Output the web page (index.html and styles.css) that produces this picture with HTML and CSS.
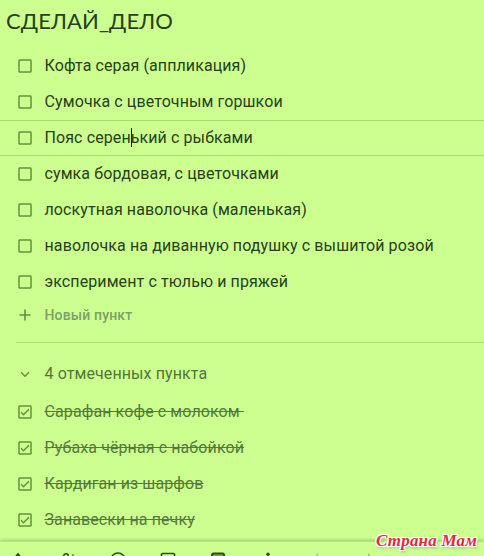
FILE: index.html
```html
<!DOCTYPE html>
<html lang="ru">
<head>
<meta charset="utf-8">
<title>СДЕЛАЙ_ДЕЛО</title>
<link rel="stylesheet" href="styles.css">
</head>
<body>
<svg class="defs" width="0" height="0">
  <symbol id="box" viewBox="0 0 24 24"><path d="M19 5v14H5V5h14m0-2H5c-1.100 0-2 .9-2 2v14c0 1.100.9 2 2 2h14c1.100 0 2-.9 2-2V5c0-1.100-.9-2-2-2z"/></symbol>
  <symbol id="checked" viewBox="0 0 24 24"><path d="M19 3H5c-1.100 0-2 .9-2 2v14c0 1.100.9 2 2 2h14c1.100 0 2-.9 2-2V5c0-1.100-.9-2-2-2zm0 16H5V5h14v14zM17.990 9l-1.410-1.420-6.590 6.590-2.580-2.570-1.420 1.410 4 3.990z"/></symbol>
</svg>
<main class="note">
  <h1 class="title">СДЕЛАЙ_ДЕЛО</h1>
  <ul class="list">
    <li class="row"><svg class="icon"><use href="#box"/></svg><span>Кофта серая (аппликация)</span></li>
    <li class="row"><svg class="icon"><use href="#box"/></svg><span>Сумочка с цветочным горшкои</span></li>
    <li class="row focused"><svg class="icon"><use href="#box"/></svg><span>Пояс серен<i class="caret"></i>ький с рыбками</span></li>
    <li class="row"><svg class="icon"><use href="#box"/></svg><span>сумка бордовая, с цветочками</span></li>
    <li class="row"><svg class="icon"><use href="#box"/></svg><span>лоскутная наволочка (маленькая)</span></li>
    <li class="row"><svg class="icon"><use href="#box"/></svg><span>наволочка на диванную подушку с вышитой розой</span></li>
    <li class="row"><svg class="icon"><use href="#box"/></svg><span>эксперимент с тюлью и пряжей</span></li>
  </ul>
  <div class="row add"><svg class="icon" viewBox="0 0 18 18"><path d="M8.200 3.500h1.600v4.700h4.700v1.600H9.800v4.700H8.200V9.800H3.500V8.200h4.700z"/></svg><span>Новый пункт</span></div>
  <div class="row summary"><svg class="icon" viewBox="0 0 18 18"><path d="M5 7.200l4 4 4-4" fill="none" stroke="currentColor" stroke-width="1.500"/></svg><span>4 отмеченных пункта</span></div>
  <ul class="list done">
    <li class="row"><svg class="icon"><use href="#checked"/></svg><span>Сарафан кофе с молоком&nbsp;</span></li>
    <li class="row"><svg class="icon"><use href="#checked"/></svg><span>Рубаха чёрная с набойкой</span></li>
    <li class="row"><svg class="icon"><use href="#checked"/></svg><span>Кардиган из шарфов</span></li>
    <li class="row"><svg class="icon"><use href="#checked"/></svg><span>Занавески на печку</span></li>
  </ul>
</main>
<footer class="toolbar">
  <svg class="tool" viewBox="0 0 18 18"><path d="M9 0.500l3.500 4.500h-7z"/></svg>
  <svg class="tool" viewBox="0 0 18 18"><circle cx="7" cy="4" r="2.300" fill="none" stroke="currentColor" stroke-width="1.500"/><path d="M13.500 2h1v5h-1z"/></svg>
  <svg class="tool" viewBox="0 0 18 18"><circle cx="9" cy="8" r="7" fill="none" stroke="currentColor" stroke-width="1.600"/><path d="M6 4h2v2H6zM10 4h2v2h-2z"/></svg>
  <svg class="tool" viewBox="0 0 18 18"><rect x="2.500" y="1.500" width="13" height="13" rx="1" fill="none" stroke="currentColor" stroke-width="1.700"/></svg>
  <svg class="tool" viewBox="0 0 18 18"><rect x="3" y="1.500" width="12" height="13" rx="1.500" fill="none" stroke="currentColor" stroke-width="2"/><path d="M3 2h12v3H3z" opacity=".5"/></svg>
  <svg class="tool" viewBox="0 0 18 18"><circle cx="9" cy="2.200" r="1.700"/></svg>
  <svg class="tool faint" viewBox="0 0 18 18"><path d="M7 3l2-2v4z"/></svg>
  <svg class="tool faint" viewBox="0 0 18 18"><path d="M9 1l2 2v2H9z"/></svg>
</footer>
<div class="watermark">Страна Мам</div>
</body>
</html>
```
FILE: styles.css
```css
* { box-sizing: border-box; }
html, body { margin: 0; height: 556px; overflow: hidden; }
body {
  display: flex;
  flex-direction: column;
  position: relative;
  background: #ccff90;
  color: #28401a;
  font-family: Roboto, "Liberation Sans", sans-serif;
}
.defs { position: absolute; }
.note { height: 541px; }
.title {
  height: 48px;
  margin: 0;
  padding: 6px 0 0 6px;
  font: 400 22px/30px Lato, "Open Sans", sans-serif;
  letter-spacing: .1px;
  white-space: nowrap;
}
.list { list-style: none; margin: 0; padding: 0; }
.row {
  display: flex;
  align-items: center;
  height: 36px;
  padding-left: 16px;
  gap: 10.500px;
  font-size: 16px;
  line-height: 24px;
  letter-spacing: .1px;
  white-space: nowrap;
}
.icon { width: 18px; height: 18px; flex: none; color: #65903c; fill: currentColor; }
.focused { border-top: 1px solid #a8d775; border-bottom: 1px solid #a8d775; }
.caret {
  display: inline-block;
  width: 1px;
  height: 19px;
  margin: 0 -1px 0 0;
  vertical-align: -4px;
  background: #142407;
}
.add { height: 30px; font-size: 14px; font-weight: 500; letter-spacing: .16px; color: #7ea064; }
.summary {
  height: 52px;
  margin: 12px 0 0 16px;
  padding: 10px 0 0;
  padding-left: 0;
  border-top: 1px solid #afdf7c;
  color: #52763a;
}
.done { color: #557a3c; }
.done span { text-decoration: line-through; }
.toolbar {
  flex: none;
  display: flex;
  gap: 32px;
  height: 15px;
  padding: 11px 0 0 9px;
  overflow: hidden;
  background: linear-gradient(#b5e57d 0 1px, #ccff90 1px);
  box-shadow: 0 -1px 3px #99c965;
  color: #304d1b;
}
.tool { width: 18px; height: 18px; flex: none; fill: currentColor; }
.faint { color: #9bc672; }
.watermark {
  position: absolute;
  left: 376px;
  top: 531px;
  font: italic 700 17px/20px "Liberation Serif", serif;
  letter-spacing: .2px;
  color: #e02b35;
  white-space: nowrap;
  text-shadow: 1px 0 #fff, -1px 0 #fff, 0 1px #fff, 0 -1px #fff, 1px 1px #fff, -1px -1px #fff, 1px -1px #fff, -1px 1px #fff, 0 0 3px #fff, 1px 2px 3px #809967;
}
```
